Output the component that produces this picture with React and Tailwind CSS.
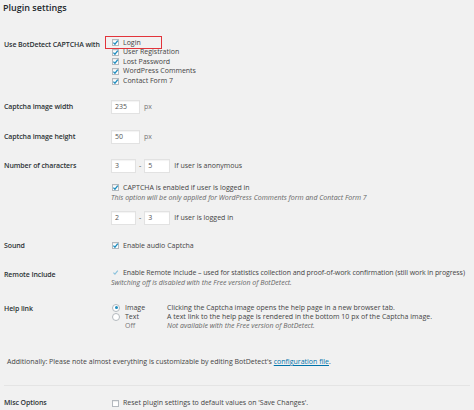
import React from "react";

const Check = ({ checked = true }) => (
  <span className="w-[7px] h-[7px] bg-white border border-[#b4b9be] shadow-[inset_0_1px_1px_rgba(0,0,0,0.08)] flex items-center justify-center shrink-0">
    {checked && (
      <svg viewBox="0 0 10 10" className="w-[7px] h-[7px] overflow-visible">
        <path d="M2 5.2 L4.2 7.4 L8.3 2.4" fill="none" stroke="#1e8cbe" strokeWidth="1.9" />
      </svg>
    )}
  </span>
);

const Radio = ({ on }) => (
  <span className="w-[8px] h-[8px] rounded-full bg-white border border-[#b4b9be] flex items-center justify-center shrink-0">
    {on && <span className="w-[3px] h-[3px] rounded-full bg-[#1e8cbe]" />}
  </span>
);

const Field = ({ value, width }) => (
  <span
    className="h-[14px] bg-white border border-[#e2e2e2] shadow-[inset_0_1px_1px_rgba(0,0,0,0.05)] pl-[3px] leading-[12px] text-[#555]"
    style={{ width }}
  >
    {value}
  </span>
);

export default function App() {
  const label = "w-[107px] shrink-0 pl-[4px] whitespace-nowrap font-semibold text-[7px] tracking-[-0.1px] text-[#2c3135]";

  return (
    <div className="w-[474px] h-[410px] overflow-hidden bg-[#f1f1f1] font-['Open_Sans',sans-serif] text-[7px] text-[#444]">
      <h1 className="pl-[3px] pt-[1px] h-[16px] text-[9px] leading-[13px] font-semibold text-[#23282d]">
        Plugin settings
      </h1>

      {/* captcha locations */}
      <div className="flex mt-[22px]">
        <div className={`${label} pt-[2px] leading-[10px]`}>Use BotDetect CAPTCHA with</div>
        <div className="flex flex-col pl-[4px]">
          {["Login", "User Registration", "Lost Password", "WordPress Comments", "Contact Form 7"].map((t, i) => (
            <div key={t} className="relative flex items-center gap-[4px] h-[9.6px] pl-[1px]">
              {i === 0 && (
                <span className="absolute left-[-6px] top-[-2px] w-[57px] h-[13px] border-[1.5px] border-[#e2343b]" />
              )}
              <Check />
              <span>{t}</span>
            </div>
          ))}
        </div>
      </div>

      <div className="flex mt-[14px]">
        <div className={`${label} leading-[13px]`}>Captcha image width</div>
        <div className="flex items-center gap-[4px] pl-[4px]">
          <Field value="235" width={29} />
          <span className="text-[#777]">px</span>
        </div>
      </div>

      <div className="flex mt-[16px]">
        <div className={`${label} leading-[14px]`}>Captcha image height</div>
        <div className="flex items-center gap-[4px] pl-[4px]">
          <Field value="50" width={29} />
          <span className="text-[#777]">px</span>
        </div>
      </div>

      {/* number of characters */}
      <div className="flex mt-[15px]">
        <div className={`${label} leading-[14px]`}>Number of characters</div>
        <div className="flex flex-col pl-[4px]">
          <div className="flex items-center">
            <Field value="3" width={25} />
            <span className="mx-[3px]">-</span>
            <Field value="5" width={26} />
            <span className="ml-[4px]">If user is anonymous</span>
          </div>
          <div className="flex items-center gap-[4px] mt-[10px] h-[10px] pl-[1px]">
            <Check />
            <span>CAPTCHA is enabled if user is logged in</span>
          </div>
          <div className="italic text-[#666] leading-[10px] h-[10px]">
            This option will be only applied for WordPress Comments form and Contact Form 7
          </div>
          <div className="flex items-center mt-[8px]">
            <Field value="2" width={25} />
            <span className="mx-[3px]">-</span>
            <Field value="3" width={26} />
            <span className="ml-[4px]">If user is logged in</span>
          </div>
        </div>
      </div>

      <div className="flex mt-[16px]">
        <div className={`${label} leading-[10px]`}>Sound</div>
        <div className="flex items-center gap-[4px] h-[10px] pl-[5px]">
          <Check />
          <span>Enable audio Captcha</span>
        </div>
      </div>

      <div className="flex mt-[17px]">
        <div className={`${label} pt-[2px] leading-[10px]`}>Remote Include</div>
        <div className="flex flex-col pl-[4px] min-w-0">
          <div className="flex items-center gap-[4px] h-[9.6px] pl-[1px] whitespace-nowrap">
            <span className="w-[7px] h-[7px] flex items-center justify-center shrink-0">
              <svg viewBox="0 0 10 10" className="w-[7px] h-[7px] overflow-visible">
                <path d="M2 5.2 L4.2 7.4 L8.3 2.4" fill="none" stroke="#8cc3dd" strokeWidth="1.6" />
              </svg>
            </span>
            <span className="tracking-[-0.08px]">
              Enable Remote Include – used for statistics collection and proof-of-work confirmation (still work in progress)
            </span>
          </div>
          <div className="italic text-[#666] leading-[9.6px] h-[9.6px]">
            Switching off is disabled with the Free version of BotDetect.
          </div>
        </div>
      </div>

      <div className="flex mt-[16px]">
        <div className={`${label} pt-[1px] leading-[10px]`}>Help link</div>
        <div className="grid grid-cols-[55px_1fr] pl-[5px] leading-[9px]">
          <div className="flex items-center gap-[5px] h-[9px]"><Radio on /><span>Image</span></div>
          <div className="h-[9px]">Clicking the Captcha image opens the help page in a new browser tab.</div>
          <div className="flex items-center gap-[5px] h-[9px]"><Radio /><span>Text</span></div>
          <div className="h-[9px]">A text link to the help page is rendered in the bottom 10 px of the Captcha image.</div>
          <div className="flex items-center gap-[5px] h-[9px]"><span className="w-[8px]" /><span className="text-[#777]">Off</span></div>
          <div className="h-[9px] italic text-[#666]">Not available with the Free version of BotDetect.</div>
        </div>
      </div>

      <div className="mt-[27px] pl-[7px] leading-[10px]">
        Additionally: Please note almost everything is customizable by editing BotDetect's{" "}
        <a href="#" className="text-[#0073aa] underline">configuration file</a>.
      </div>

      <div className="mt-[18px] mx-[4px] h-px bg-[#e4e4e4]" />

      <div className="flex mt-[12px]">
        <div className={`${label} leading-[10px]`}>Misc Options</div>
        <div className="flex items-center gap-[4px] h-[10px] pl-[5px]">
          <Check checked={false} />
          <span>Reset plugin settings to default values on 'Save Changes'.</span>
        </div>
      </div>
    </div>
  );
}
